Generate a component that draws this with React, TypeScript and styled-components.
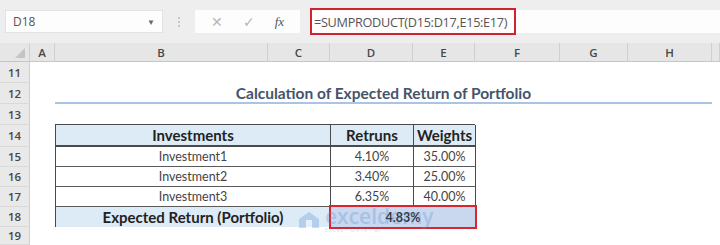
import React from 'react'
import styled, { createGlobalStyle } from 'styled-components'

const GlobalStyle = createGlobalStyle`
  html, body {
    margin: 0;
    padding: 0;
    background: #ffffff;
    overflow: hidden;
  }
  * { box-sizing: border-box; }
`

const Page = styled.div`
  width: 720px;
  height: 245px;
  background: #ffffff;
  display: flex;
  flex-direction: column;
  font-family: "Lato", "Liberation Sans", sans-serif;
`

const FormulaBar = styled.div`
  height: 43px;
  background: #eeeeee;
  display: flex;
  align-items: center;
  padding: 0 0 0 5px;
  font-family: "Open Sans", "Noto Sans", sans-serif;
`

const NameBox = styled.div`
  width: 158px;
  height: 23px;
  background: #fdfdfd;
  border: 1px solid #e2e2e2;
  display: flex;
  align-items: center;
  justify-content: space-between;
  padding: 0 7px 0 7px;
  font-size: 12px;
  color: #555;
`

const Caret = styled.span`
  font-size: 8px;
  color: #666;
`

const Dots = styled.div`
  width: 32px;
  display: flex;
  flex-direction: column;
  align-items: center;
  gap: 2px;
  span {
    width: 2px;
    height: 2px;
    background: #b8b8b8;
    border-radius: 1px;
  }
`

const FuncBox = styled.div`
  width: 105px;
  height: 23px;
  background: #fdfdfd;
  display: flex;
  align-items: center;
  justify-content: space-around;
  padding: 0 6px;
  color: #b5b5b5;
  font-size: 14px;
`

const Fx = styled.span`
  font-family: "Liberation Serif", serif;
  font-style: italic;
  font-size: 13px;
  color: #555;
`

const FormulaInput = styled.div`
  flex: 1;
  height: 23px;
  margin-left: 10px;
  background: #fdfdfd;
  display: flex;
  align-items: center;
`

const FormulaText = styled.div`
  height: 27px;
  width: 206px;
  border: 2px solid #cf2430;
  display: flex;
  align-items: center;
  padding-left: 2px;
  font-size: 12.7px;
  color: #555;
  letter-spacing: -0.3px;
  white-space: nowrap;
  overflow: hidden;
`

const Sheet = styled.div`
  position: relative;
  flex: 1;
  display: grid;
  grid-template-columns: 30px 25px 213px 62px 83px 62px 85px 68px 84px 1fr;
  grid-template-rows: 19px 21px 21px 21px 22px 20px 20px 20px 20px 1fr;
`

const Corner = styled.div`
  grid-row: 1;
  grid-column: 1;
  background: #e6e6e6;
  border-right: 1px solid #d0d0d0;
  border-bottom: 1px solid #c6c6c6;
  position: relative;
  &::after {
    content: '';
    position: absolute;
    right: 4px;
    bottom: 3px;
    border-left: 10px solid transparent;
    border-bottom: 10px solid #c4c4c4;
  }
`

const ColHead = styled.div<{ $col: number }>`
  grid-row: 1;
  grid-column: ${({ $col }) => $col};
  background: #e6e6e6;
  border-right: 1px solid #cfcfcf;
  border-bottom: 1px solid #c6c6c6;
  display: flex;
  align-items: center;
  justify-content: center;
  font-family: "Open Sans", "Noto Sans", sans-serif;
  font-size: 11.5px;
  font-weight: 600;
  color: #474747;
`

const RowHead = styled.div<{ $row: number }>`
  grid-column: 1;
  grid-row: ${({ $row }) => $row};
  background: #e9e9e9;
  border-right: 1px solid #cfcfcf;
  border-bottom: 1px solid #dadada;
  display: flex;
  align-items: center;
  justify-content: center;
  font-family: "Open Sans", "Noto Sans", sans-serif;
  font-size: 11.5px;
  font-weight: 600;
  color: #474747;
`

const Title = styled.div`
  grid-row: 3;
  grid-column: 3 / 10;
  border-bottom: 2px solid #a9c4e4;
  display: flex;
  align-items: center;
  justify-content: center;
  font-size: 15.5px;
  font-weight: 700;
  color: #46546b;
  padding-top: 1px;
`

const Table = styled.div`
  grid-row: 5 / 10;
  grid-column: 3 / 7;
  display: grid;
  grid-template-columns: 275px 83px 62px;
  grid-template-rows: 22px 20px 20px 20px 20px;
  border: 1.5px solid #4a4a4a;
  border-right: none;
  margin-top: -1px;
  color: #333;
`

const Cell = styled.div<{ $head?: boolean; $total?: boolean; $last?: boolean }>`
  display: flex;
  align-items: center;
  justify-content: center;
  border-right: 1.5px solid #4a4a4a;
  border-bottom: ${({ $head, $last }) => ($last ? 'none' : $head ? '2px solid #4a4a4a' : '1px solid #5a5a5a')};
  background: ${({ $head, $total }) => ($head || $total ? '#ddebf7' : '#ffffff')};
  font-weight: ${({ $head, $total }) => ($head || $total ? 700 : 400)};
  font-size: ${({ $head, $total }) => ($head || $total ? '15px' : '12.5px')};
  color: ${({ $head, $total }) => ($head || $total ? '#222' : '#444')};
`

const Result = styled.div`
  grid-column: 2 / 4;
  display: flex;
  align-items: center;
  justify-content: center;
  background: #c9d8ef;
  border: 2px solid #d8262f;
  margin: -2px -1px -2px -2px;
  font-weight: 700;
  font-size: 12.5px;
  color: #333;
`

const Watermark = styled.div`
  position: absolute;
  left: 298px;
  top: 163px;
  display: flex;
  align-items: center;
  gap: 5px;
  opacity: 0.3;
  pointer-events: none;
`

const MarkText = styled.div`
  display: flex;
  flex-direction: column;
  line-height: 1;
  font-family: "Open Sans", "Noto Sans", sans-serif;
  color: #5b8fd0;
  span:first-child {
    font-size: 21px;
    font-weight: 600;
  }
  span:last-child {
    font-size: 5px;
    letter-spacing: 1px;
    margin-top: 1px;
  }
`

const columns = ['A', 'B', 'C', 'D', 'E', 'F', 'G', 'H', '']
const rows = [11, 12, 13, 14, 15, 16, 17, 18, 19]

const data = [
  { name: 'Investment1', ret: '4.10%', weight: '35.00%' },
  { name: 'Investment2', ret: '3.40%', weight: '25.00%' },
  { name: 'Investment3', ret: '6.35%', weight: '40.00%' },
]

export default function App() {
  return (
    <Page>
      <GlobalStyle />
      <FormulaBar>
        <NameBox>
          D18
          <Caret>▼</Caret>
        </NameBox>
        <Dots>
          <span />
          <span />
          <span />
        </Dots>
        <FuncBox>
          <span>✕</span>
          <span>✓</span>
          <Fx>fx</Fx>
        </FuncBox>
        <FormulaInput>
          <FormulaText>=SUMPRODUCT(D15:D17,E15:E17)</FormulaText>
        </FormulaInput>
      </FormulaBar>
      <Sheet>
        <Corner />
        {columns.map((c, i) => (
          <ColHead key={i} $col={i + 2}>{c}</ColHead>
        ))}
        {rows.map((r, i) => (
          <RowHead key={r} $row={i + 2}>{r}</RowHead>
        ))}
        <Title>Calculation of Expected Return of Portfolio</Title>
        <Table>
          <Cell $head>Investments</Cell>
          <Cell $head>Retruns</Cell>
          <Cell $head>Weights</Cell>
          {data.map((d) => (
            <React.Fragment key={d.name}>
              <Cell>{d.name}</Cell>
              <Cell>{d.ret}</Cell>
              <Cell>{d.weight}</Cell>
            </React.Fragment>
          ))}
          <Cell $total $last>Expected Return (Portfolio)</Cell>
          <Result>4.83%</Result>
        </Table>
        <Watermark>
          <svg width="22" height="18" viewBox="0 0 22 18">
            <path d="M1 17 L1 8 L11 1 L21 8 L21 17 Z" fill="#5b8fd0" />
            <rect x="8" y="9" width="6" height="8" fill="#ffffff" />
          </svg>
          <MarkText>
            <span>exceldemy</span>
            <span>EXCEL · DATA · BI</span>
          </MarkText>
        </Watermark>
      </Sheet>
    </Page>
  )
}
